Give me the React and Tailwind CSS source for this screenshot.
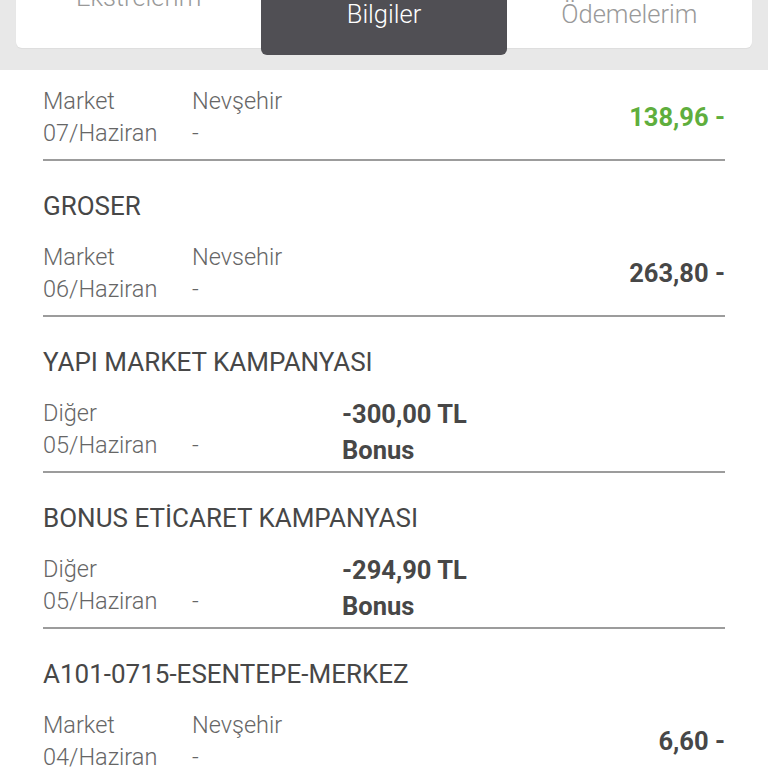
const rows = [
  { title: 'GROSER', cat: 'Market', city: 'Nevsehir', date: '06/Haziran', amount: '263,80 -' },
  { title: 'YAPI MARKET KAMPANYASI', cat: 'Diğer', city: '', date: '05/Haziran', bonus: '-300,00 TL' },
  { title: 'BONUS ETİCARET KAMPANYASI', cat: 'Diğer', city: '', date: '05/Haziran', bonus: '-294,90 TL' },
  { title: 'A101-0715-ESENTEPE-MERKEZ', cat: 'Market', city: 'Nevşehir', date: '04/Haziran', amount: '6,60 -' },
];

function Details({ row, green }) {
  return (
    <div className="h-[64px] flex items-center">
      <div className="w-[149px] text-[23.5px] leading-[32px] font-light text-[#666]">
        <div>{row.cat}</div>
        <div>{row.date}</div>
      </div>
      <div className="w-[150px] text-[23.5px] leading-[32px] font-light text-[#666]">
        <div>{row.city || '\u00a0'}</div>
        <div>-</div>
      </div>
      {row.bonus ? (
        <div className="flex-1 pt-[6px] text-[25.5px] leading-[36px] font-bold text-[#474747]">
          <div>{row.bonus}</div>
          <div>Bonus</div>
        </div>
      ) : (
        <div className={`flex-1 text-right text-[25.5px] font-bold ${green ? 'text-[#5fae3d]' : 'text-[#474747]'}`}>
          {row.amount}
        </div>
      )}
    </div>
  );
}

export default function App() {
  return (
    <div className="w-[768px] h-[768px] overflow-hidden bg-white font-['Roboto',sans-serif]">
      {/* tab header */}
      <div className="h-[70px] bg-[#e8e8e8] overflow-hidden">
        <div className="mx-4 -mt-[40px] flex items-start">
          <div className="flex-1 h-[88px] bg-white rounded-bl-md flex justify-center pt-[23px] shadow-[0_1px_1px_rgba(0,0,0,0.05)]">
            <span className="text-[25.5px] leading-[28px] font-light text-[#999]">Ekstrelerim</span>
          </div>
          <div className="flex-1 h-[95px] bg-[#504f54] rounded-b-md flex justify-center pt-[40px]">
            <span className="text-[25.5px] leading-[28px] font-light text-white">Bilgiler</span>
          </div>
          <div className="flex-1 h-[88px] bg-white rounded-br-md flex justify-center pt-[40px] shadow-[0_1px_1px_rgba(0,0,0,0.05)]">
            <span className="text-[25.5px] leading-[28px] font-light text-[#999]">Ödemelerim</span>
          </div>
        </div>
      </div>

      {/* transactions */}
      <div className="px-[43px]">
        <div className="pt-[15px] pb-[10px] border-b-2 border-[#9c9c9c]">
          <Details row={{ cat: 'Market', city: 'Nevşehir', date: '07/Haziran', amount: '138,96 -' }} green />
        </div>
        {rows.map((row) => (
          <div key={row.title} className="pt-[29px] pb-[10px] border-b-2 border-[#9c9c9c]">
            <div className="text-[26px] leading-[32px] text-[#474747]">{row.title}</div>
            <div className="mt-[19px]">
              <Details row={row} />
            </div>
          </div>
        ))}
      </div>
    </div>
  );
}
